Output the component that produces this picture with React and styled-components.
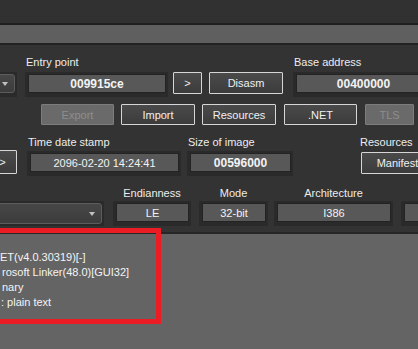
import React from "react";
import styled, { createGlobalStyle } from "styled-components";

const GlobalStyle = createGlobalStyle`
  html, body {
    margin: 0;
    padding: 0;
    background: #646464;
    overflow: hidden;
  }
  body {
    font-family: "Liberation Sans", Arial, sans-serif;
    font-size: 11px;
    color: #eeeeee;
  }
`;

const Screen = styled.div`
  position: relative;
  width: 418px;
  height: 349px;
  overflow: hidden;
  display: flex;
  flex-direction: column;
  background: #646464;
`;

const TopStrip = styled.div`
  height: 23px;
  flex-shrink: 0;
  background: #313131;
  border-bottom: 2px solid #1f1f1f;
`;

const TitleBar = styled.div`
  height: 18px;
  flex-shrink: 0;
  background: #5f5f5f;
  border-bottom: 2px solid #222222;
`;

const Panel = styled.div`
  flex-shrink: 0;
  background: #333333;
  padding: 11px 0 6px 0;
  border-bottom: 2px solid #262626;
`;

const Row = styled.div`
  display: flex;
  align-items: ${(p) => (p.$top ? "flex-start" : "flex-end")};
  margin-top: ${(p) => p.$gap || 0}px;
`;

const Group = styled.div`
  display: flex;
  flex-direction: column;
  flex-shrink: 0;
  margin-left: ${(p) => p.$ml || 0}px;
  width: ${(p) => p.$w}px;
`;

const Label = styled.div`
  height: 13px;
  line-height: 13px;
  margin-bottom: ${(p) => p.$mb ?? 3}px;
  padding-left: ${(p) => (p.$center ? 0 : 1)}px;
  text-align: ${(p) => (p.$center ? "center" : "left")};
  white-space: nowrap;
  color: #ededed;
`;

const Frame = styled.div`
  box-sizing: border-box;
  height: 25px;
  background: #2a2a2a;
  padding: 2px 2px 4px 3px;
`;

const Field = styled.div`
  box-sizing: border-box;
  height: 19px;
  border: 1px solid #232323;
  background: #585858;
  display: flex;
  align-items: center;
  justify-content: center;
  white-space: nowrap;
  overflow: hidden;
  color: #f3f3f3;
  font-size: ${(p) => (p.$bold ? 12 : 11)}px;
  font-weight: ${(p) => (p.$bold ? 700 : 400)};
`;

const Combo = styled.div`
  box-sizing: border-box;
  height: ${(p) => p.$h || 19}px;
  border: 1px solid #5c5c5c;
  border-radius: 3px;
  background: linear-gradient(#474747, #3c3c3c);
  display: flex;
  align-items: center;
  justify-content: flex-end;
  padding-right: 6px;
`;

const Arrow = styled.span`
  width: 0;
  height: 0;
  border-left: 3px solid transparent;
  border-right: 3px solid transparent;
  border-top: 4px solid #c2c2c2;
`;

const Button = styled.button`
  box-sizing: border-box;
  flex-shrink: 0;
  width: ${(p) => p.$w}px;
  height: ${(p) => p.$h || 21}px;
  margin: 0 0 ${(p) => p.$mb || 0}px ${(p) => p.$ml || 0}px;
  padding: 0;
  border-radius: 1px;
  font-family: inherit;
  font-size: 11px;
  display: flex;
  align-items: center;
  justify-content: center;
  white-space: nowrap;
  border: 1px solid ${(p) => (p.$disabled ? "#7c7c7c" : "#d6d6d6")};
  background: ${(p) =>
    p.$disabled ? "#6a6a6a" : "linear-gradient(#4a4a4a, #3c3c3c)"};
  color: ${(p) => (p.$disabled ? "#8e8e8e" : "#f0f0f0")};
`;

const Output = styled.div`
  flex: 1;
  padding-top: 16px;
  background: #646464;
  color: #f4f4f4;
  line-height: 15px;
`;

const Line = styled.div`
  padding-left: ${(p) => p.$indent || 0}px;
  white-space: nowrap;
`;

const Highlight = styled.div`
  position: absolute;
  left: -10px;
  top: 228px;
  width: 171px;
  height: 96px;
  box-sizing: border-box;
  border: 5px solid #ec1c24;
  pointer-events: none;
`;

function Box({ label, value, bold, ml, w, center, mb }) {
  return (
    <Group $ml={ml} $w={w}>
      <Label $center={center} $mb={mb}>
        {label}
      </Label>
      <Frame>
        <Field $bold={bold}>{value}</Field>
      </Frame>
    </Group>
  );
}

export default function App() {
  return (
    <Screen>
      <GlobalStyle />
      <TopStrip />
      <TitleBar />
      <Panel>
        <Row>
          <Group $ml={-60} $w={77}>
            <Frame>
              <Combo>
                <Arrow />
              </Combo>
            </Frame>
          </Group>
          <Box label="Entry point" value="009915ce" bold ml={8} w={143} />
          <Button $ml={5} $w={29} $h={22} $mb={3}>
            &gt;
          </Button>
          <Button $ml={7} $w={74} $h={22} $mb={3}>
            Disasm
          </Button>
          <Box label="Base address" value="00400000" bold ml={10} w={140} />
        </Row>

        <Row $top $gap={7}>
          <Button $ml={41} $w={73} $disabled>
            Export
          </Button>
          <Button $ml={7} $w={74}>
            Import
          </Button>
          <Button $ml={7} $w={74}>
            Resources
          </Button>
          <Button $ml={8} $w={73}>
            .NET
          </Button>
          <Button $ml={8} $w={49} $disabled>
            TLS
          </Button>
        </Row>

        <Row $gap={11}>
          <Button $ml={-12} $w={29} $h={24} $mb={2}>
            &gt;
          </Button>
          <Box label="Time date stamp" value="2096-02-20 14:24:41" ml={10} w={154} mb={2} />
          <Box label="Size of image" value="00596000" bold ml={6} w={106} mb={2} />
          <Group $ml={66} $w={80}>
            <Label $mb={3}>Resources</Label>
            <Button $ml={2} $w={73} $h={22} $mb={2}>
              Manifest
            </Button>
          </Group>
        </Row>

        <Row $gap={11}>
          <Group $ml={-40} $w={144}>
            <Frame>
              <Combo $h={21}>
                <Arrow />
              </Combo>
            </Frame>
          </Group>
          <Box label="Endianness" value="LE" center ml={9} w={78} mb={1} />
          <Box label="Mode" value="32-bit" center ml={8} w={69} mb={1} />
          <Box label="Architecture" value="I386" center ml={6} w={119} mb={1} />
          <Box label="" value="" center ml={8} w={60} mb={1} />
        </Row>
      </Panel>

      <Output>
        <Line $indent={0}>ET(v4.0.30319)[-]</Line>
        <Line $indent={2}>rosoft Linker(48.0)[GUI32]</Line>
        <Line $indent={2}>nary</Line>
        <Line $indent={1}>: plain text</Line>
      </Output>
      <Highlight />
    </Screen>
  );
}
